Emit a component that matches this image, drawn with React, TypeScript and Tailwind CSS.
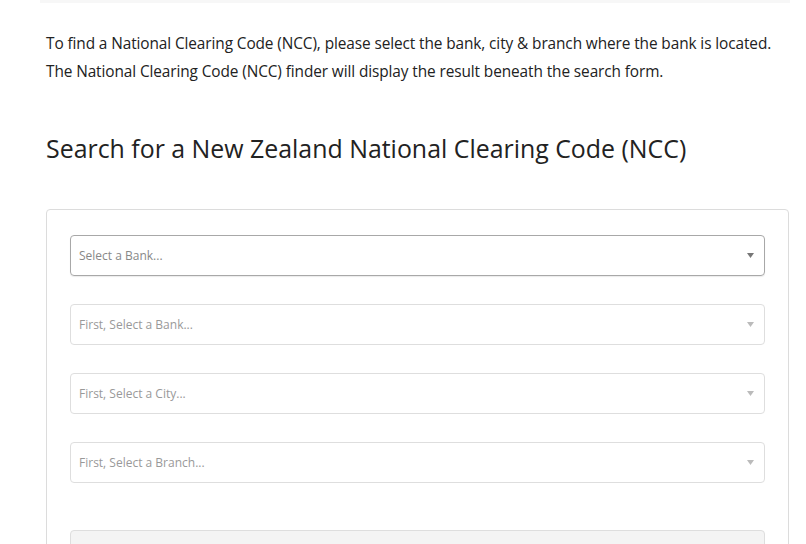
import React from 'react';

const fields = [
  { label: 'Select a Bank...', active: true },
  { label: 'First, Select a Bank...', active: false },
  { label: 'First, Select a City...', active: false },
  { label: 'First, Select a Branch...', active: false },
];

function Caret({ dark }: { dark: boolean }) {
  return (
    <svg width="7" height="5" viewBox="0 0 7 5" className="shrink-0">
      <path d="M0 0 H7 L3.5 5 Z" fill={dark ? '#777' : '#bbb'} />
    </svg>
  );
}

export default function App() {
  return (
    <div className="h-[544px] overflow-hidden bg-white font-['Open_Sans',sans-serif] text-[#222]">
      <div className="ml-[40px] mr-[16px] h-[3px] bg-[#f7f7f7]" />
      <div className="pl-[46px] pr-[17px] pt-[27px]">
        <p className="text-[15.4px] leading-[28px] tracking-[-0.1px] whitespace-nowrap">
          To find a National Clearing Code (NCC), please select the bank, city &amp; branch where the bank is located.
          <br />
          The National Clearing Code (NCC) finder will display the result beneath the search form.
        </p>

        <h2 className="mt-[45px] text-[24.9px] leading-[34px] font-normal">
          Search for a New Zealand National Clearing Code (NCC)
        </h2>

        <div className="mt-[44px] rounded-[4px] border border-[#dcdcdc] px-[23px] pt-[25px] h-[380px]">
          <div className="flex flex-col gap-[28px]">
            {fields.map((f) => (
              <div
                key={f.label}
                className={
                  f.active
                    ? 'flex h-[41px] items-center justify-between rounded-[4px] border border-[#a8a8a8] pl-[8px] pr-[10px] shadow-[0_1px_1px_rgba(0,0,0,0.08)]'
                    : 'flex h-[41px] items-center justify-between rounded-[4px] border border-[#dedede] pl-[8px] pr-[10px]'
                }
              >
                <span className={f.active ? 'text-[12px] text-[#888]' : 'text-[12px] text-[#999]'}>{f.label}</span>
                <Caret dark={f.active} />
              </div>
            ))}
            <div className="h-[41px] rounded-[4px] border border-[#dedede] bg-[#f4f4f4] mt-[19px]" />
          </div>
        </div>
      </div>
    </div>
  );
}
